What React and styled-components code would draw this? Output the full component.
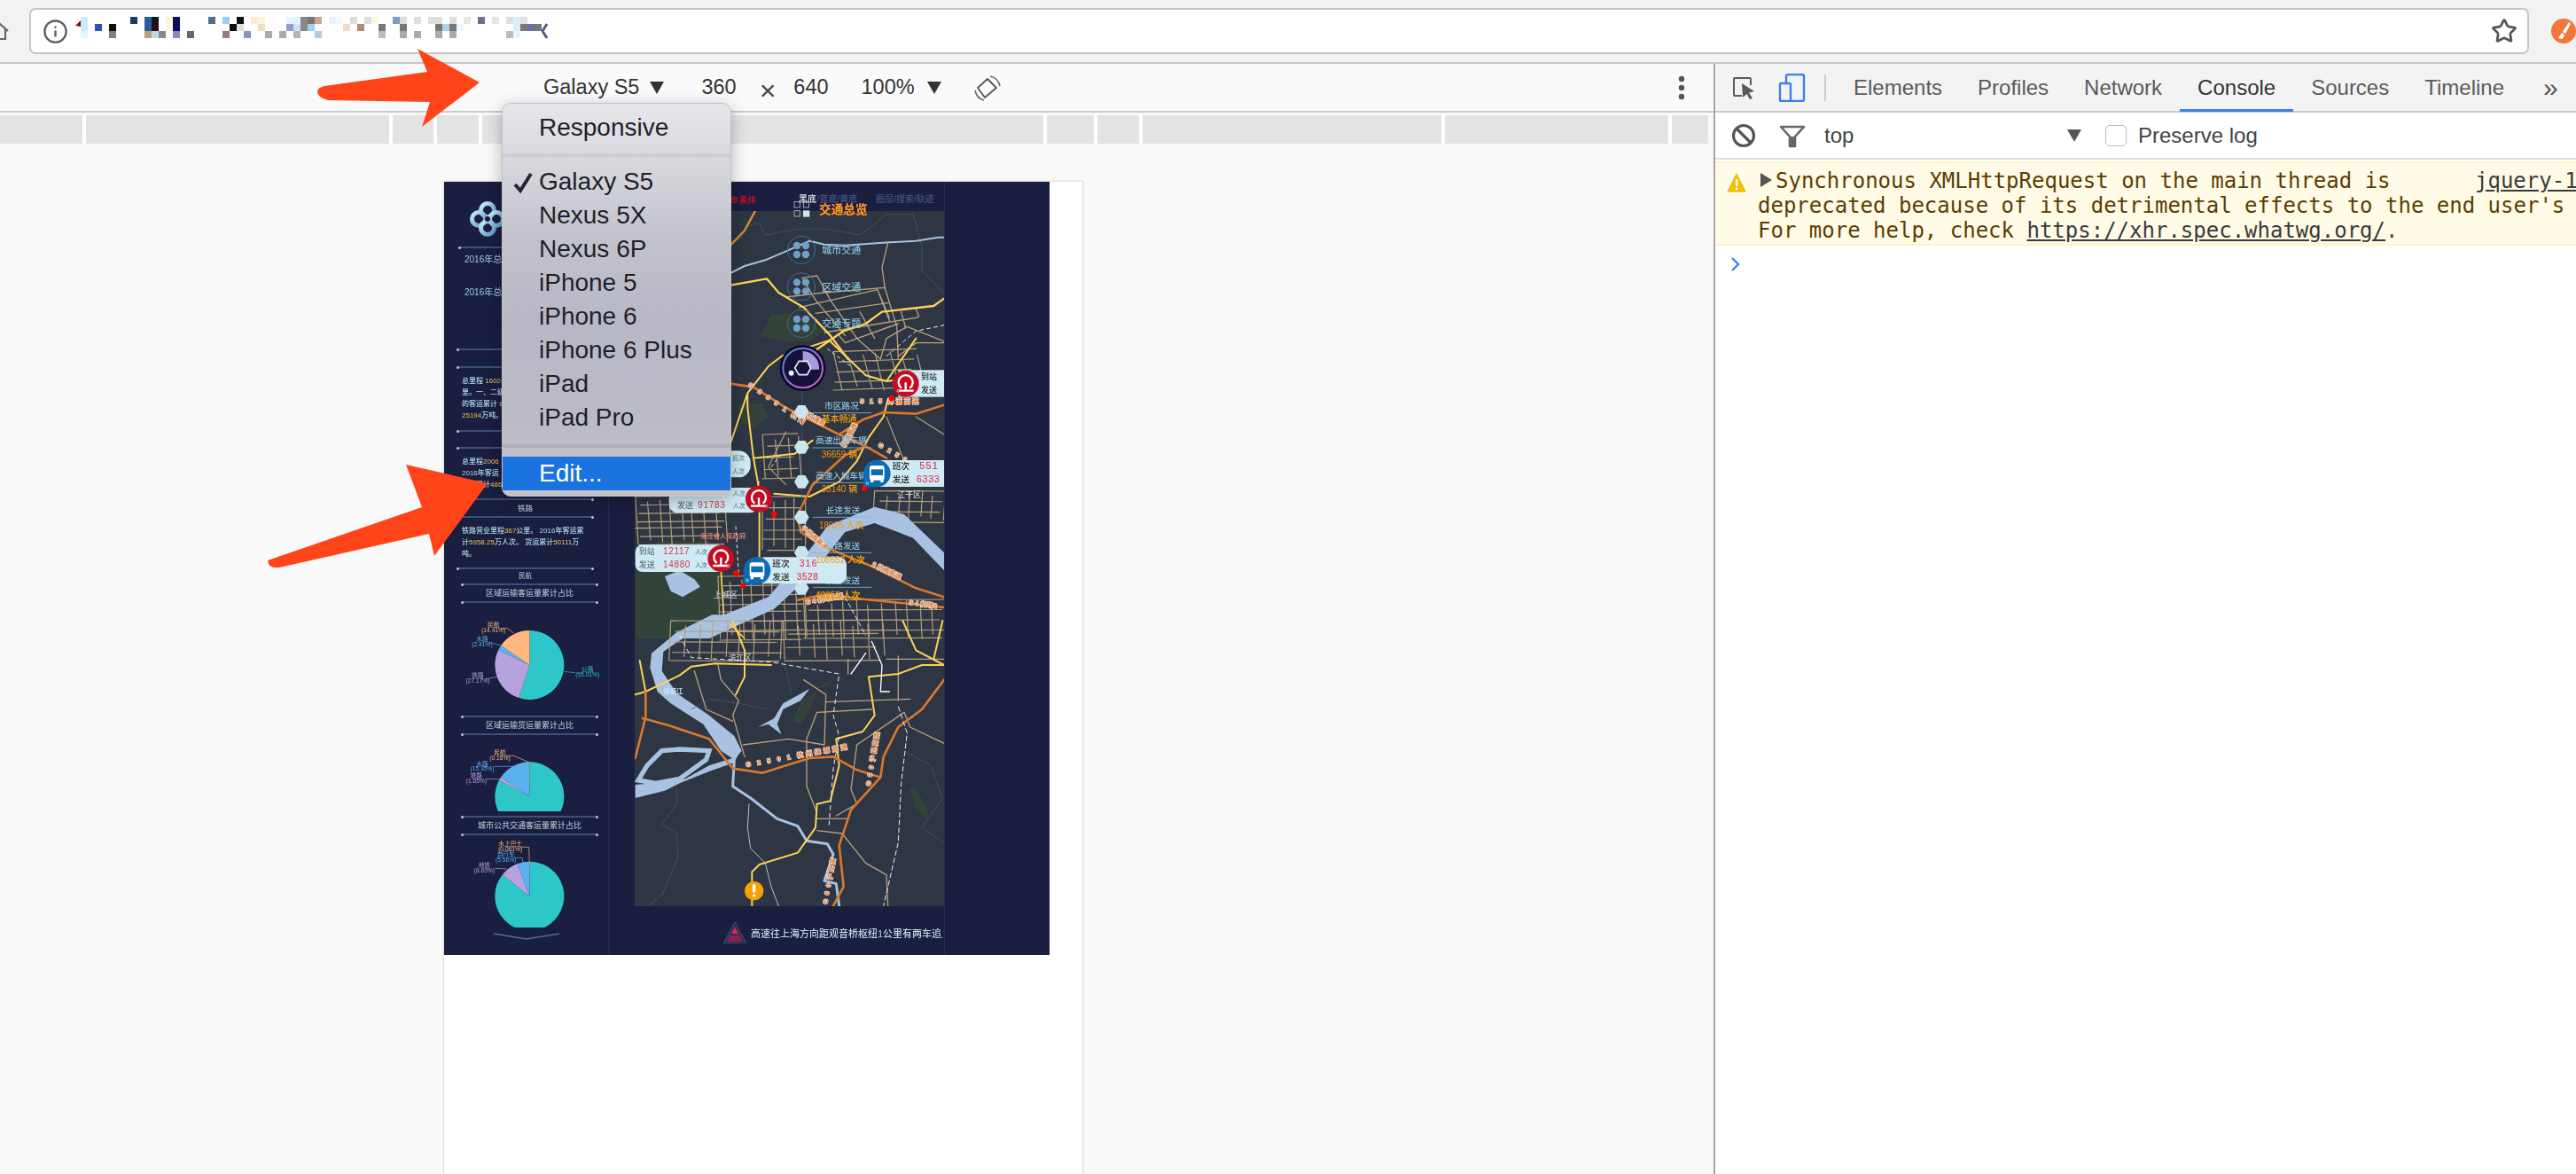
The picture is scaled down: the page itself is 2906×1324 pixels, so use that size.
import React from 'react';
import styled, { createGlobalStyle } from 'styled-components';
import { Info, Star } from 'lucide-react';

const SANS = `"Liberation Sans", Arial, sans-serif`;
const CJK = `"Liberation Sans", "Noto Sans CJK SC", sans-serif`;

const Global = createGlobalStyle`
  html, body { margin: 0; padding: 0; background: #fff; overflow: hidden; }
  #root { width: 2906px; height: 1324px; }
`;

const Window = styled.div`
  position: relative; width: 2906px; height: 1324px; overflow: hidden;
  display: flex; flex-direction: column; font-family: ${SANS};
`;

/* ---------- browser chrome ---------- */
const ChromeBar = styled.div`
  height: 70px; flex: none; display: flex; align-items: center; background: #f2f2f2;
  border-bottom: 2px solid #c4c4c4; overflow: hidden;
`;
const HomeIcon = styled.svg`width: 24px; height: 24px; flex: none; margin-left: -13px; margin-right: 22px;`;
const Omnibox = styled.div`
  width: 2820px; height: 52px; flex: none; box-sizing: border-box; background: #fff;
  border: 2px solid #c6c6c6; border-radius: 7px; display: flex; align-items: center; padding: 0 11px 0 13px;
  color: #5e5e5e;
`;
const UrlMosaic = styled.svg`width: 540px; height: 36px; margin-left: 6px; filter: blur(.7px);`;
const Spacer = styled.div`flex: 1;`;
const Extension = styled.svg`width: 28px; height: 28px; flex: none; margin-left: 25px;`;

const Mosaic = () => {
  const a = [
    [42,0,'#c8ecfc'],[42,1,'#c8ecfc'],[42,2,'#e4f6fd'],[90,1,'#2d55a5'],[138,1,'#0f0f0f'],[138,2,'#808080'],
    [210,0,'#1c3e63'],[258,0,'#2360a8'],[258,1,'#355a96'],[258,2,'#b8a080'],[282,0,'#141414'],[282,1,'#2a0c12'],
    [282,2,'#c0d8e8'],[306,2,'#888'],[330,0,'#fdf3d0'],[330,1,'#fdf8e4'],[354,0,'#0c0c60'],[354,1,'#0c0c60'],
    [354,2,'#8a88c0'],[402,2,'#666'],[474,0,'#4f6f8e'],[522,0,'#94d0f4'],[522,2,'#a07878'],[546,1,'#101010'],
    [570,0,'#101010'],[570,1,'#e0e0e0'],[594,2,'#8a94bc'],[618,0,'#fbecd0'],[642,0,'#fdf4de'],[642,1,'#f5dcc0'],
    [666,2,'#aaa'],[714,2,'#aaa'],[738,0,'#e6f6fd'],[738,1,'#8ca0d0'],[762,0,'#e0f4fb'],[762,1,'#d0e0f0'],
    [762,2,'#b8b4b0'],[786,0,'#888'],[786,1,'#888'],
    [810,0,'#777'],[834,0,'#c8a890'],[810,1,'#9fd0f0'],[882,0,'#eeeef8'],[906,0,'#f5f8ff'],[834,2,'#b8c8e0'],
    [954,0,'#ddd'],[930,1,'#f5dcc0'],[978,1,'#b88870'],[1002,0,'#ddd'],[1026,0,'#fdf6e0'],[1050,1,'#777'],[1050,2,'#bbb'],
    [1098,0,'#7e9cc8'],[1122,0,'#ddd'],[1122,1,'#777'],[1122,2,'#aaa'],[1170,0,'#ddd'],[1170,2,'#aaa'],
    [1218,0,'#ddd'],[1242,0,'#ddd'],[1242,1,'#777'],[1242,2,'#aaa'],[1266,1,'#a8d4f0'],[1290,0,'#ddd'],[1290,1,'#777'],
    [1290,2,'#aaa'],[1314,1,'#e8f8fd'],[1338,0,'#e8e4e4'],[1386,0,'#707088'],[1434,0,'#e8e4e4'],[1482,0,'#e0e0e0'],
    [1482,2,'#bbb'],[1506,0,'#d8f0fd'],[1506,1,'#d8f0fd'],[1506,2,'#e8f4fd'],[1530,0,'#e0e0e0'],[1530,1,'#777'],
    [1554,1,'#6870a8'],[1578,1,'#777'],
  ];
  return (
    <UrlMosaic viewBox="0 0 540 36">
      <path d="M2 12 L12 2 L14 14 Z" fill="#7a0c0c" />
      {a.map(([x, r, c], i) => <rect key={i} x={x / 3 - 6} y={2 + r * 8} width="8" height="8" fill={c} />)}
      <path d="M534 10 L529 18 L534 26" stroke="#4f5f7f" strokeWidth="3" fill="none" />
    </UrlMosaic>
  );
};

/* ---------- split ---------- */
const Split = styled.div`flex: 1; display: flex; min-height: 0;`;
const Emulator = styled.div`width: 1933px; flex: none; display: flex; flex-direction: column; background: #f9f9f9;`;

const DeviceToolbar = styled.div`
  height: 53px; flex: none; background: #fafafa; border-bottom: 2px solid #cbcbcb;
  display: flex; align-items: center; padding: 0 31px 0 613px; font-size: 23.5px; color: #333;
`;
const Tool = styled.span`margin-left: ${p => p.$ml || 0}px; white-space: nowrap;`;
const Caret = styled.span`
  display: inline-block; width: 0; height: 0; margin-left: ${p => p.$ml || 0}px;
  border-left: 8px solid transparent; border-right: 8px solid transparent; border-top: 14px solid ${p => p.$c || '#333'};
`;
const Times = styled.span`margin: 7px 0 0 ${p => p.$ml}px; font-size: 32px; line-height: 30px; color: #444;`;
const RotateIcon = styled.svg`width: 30px; height: 30px; margin-left: 37px; flex: none;`;
const MoreDots = styled.svg`width: 10px; height: 30px; margin-left: auto;`;

const Ruler = styled.div`
  height: 32px; flex: none; margin-top: 3px; display: flex; gap: 4px; background: #fff; width: 1927px;
`;
const RulerCell = styled.div`height: 100%; width: ${p => p.$w}px; flex: none; background: #e3e3e3;`;

const Viewport = styled.div`flex: 1; padding: 42px 0 0 500px; min-height: 0; background: #f9f9f9;`;
const DevicePage = styled.div`
  width: 722px; height: 1200px; background: #fff; border: 1px solid #e2e2e2; border-bottom: 0;
  box-sizing: border-box; box-shadow: 0 0 3px rgba(0,0,0,.08);
`;
const Dashboard = styled.div`
  width: 683px; height: 872px; display: flex; background: #1a1e3f; overflow: hidden;
  font-family: ${CJK}; filter: blur(.35px);
`;

/* ---------- dashboard left column ---------- */
const SideColumn = styled.div`width: 185px; flex: none; border-right: 1px solid #262c50; margin-right: 29px; box-sizing: content-box;`;
const LogoMark = styled.svg`display: block; width: 40px; height: 40px; margin: 22px 0 0 29px;`;
const Rule = styled.div`
  position: relative; height: 2px; background: #3c5078; width: 153px;
  margin: ${p => p.$mt || 0}px 0 0 ${p => p.$ml ?? 15}px;
  &::before, &::after { content: ''; position: absolute; top: -.5px; width: 3px; height: 3px; border-radius: 50%; background: #b8cede; }
  &::before { left: -1px; } &::after { right: -1px; }
`;
const StatLine = styled.div`
  height: 14px; line-height: 14px; font-size: 10px; text-align: ${p => p.$center ? 'center' : 'left'};
  padding-left: ${p => p.$center ? 0 : 23}px; margin-top: ${p => p.$mt || 0}px; color: ${p => p.$c || '#9ccde4'}; white-space: nowrap;
`;
const SectionTitle = styled.div`
  height: ${p => p.$h || 18}px; line-height: ${p => p.$h || 18}px; width: 153px; text-align: center;
  margin-left: ${p => p.$ml ?? 15}px; font-size: ${p => p.$size || 8.5}px; font-weight: 500; color: #a4bccc; white-space: nowrap;
`;
const Para = styled.div`margin: 8px 0 0 20px; width: 150px; font-size: 8px; font-weight: 500; line-height: 13px; color: #b0d8ec; white-space: nowrap;`;
const Num = styled.span`color: #f2c55c;`;
const ChartSvg = styled.svg`display: block; width: 185px; height: ${p => p.$h}px; margin-bottom: ${p => p.$mb || 0}px;`;
const ChartText = styled.text`font-family: ${CJK}; font-size: 20px; text-anchor: middle; fill: ${p => p.$c};`;
const Chevron = styled.svg`display: block; width: 74px; height: 8px; margin: 6px 0 0 56px;`;

const slicePath = (cx, cy, r, a0, a1) => {
  const p = a => [cx + r * Math.sin(a * 2 * Math.PI), cy - r * Math.cos(a * 2 * Math.PI)];
  const [x0, y0] = p(a0), [x1, y1] = p(a1);
  return `M${cx},${cy} L${x0},${y0} A${r},${r} 0 ${a1 - a0 > .5 ? 1 : 0} 1 ${x1},${y1} Z`;
};

const Pie = ({ top, h, cy, slices, labels, mb }) => {
  let acc = 0;
  return (
    <ChartSvg $h={h} $mb={mb} viewBox={`36 ${top} 555 ${h * 3}`}>
      {slices.map(([v, c], i) => {
        const d = slicePath(325, cy, 117, acc, acc + v);
        acc += v;
        return <path key={i} d={d} fill={c} />;
      })}
      {labels.map((l, i) => (
        <g key={i}>
          <polyline points={l.line} fill="none" stroke={l.c} strokeWidth="2" />
          <ChartText x={l.x} y={l.y} $c={l.c}>{l.a}</ChartText>
          <ChartText x={l.x} y={l.y + 17} $c={l.c}>{l.b}</ChartText>
        </g>
      ))}
    </ChartSvg>
  );
};

const T = '#2ec7c9', P = '#b6a2de', B = '#5ab1ef', O = '#ffb980';

const SideBar = () => (
  <SideColumn>
    <LogoMark viewBox="0 0 40 40">
      <defs>
        <linearGradient id="lg" x1="0" y1="0" x2="1" y2="1">
          <stop offset="0" stopColor="#c4eef8" /><stop offset="1" stopColor="#5b93c4" />
        </linearGradient>
      </defs>
      <g fill="none" stroke="url(#lg)" strokeWidth="5">
        <circle cx="20" cy="10" r="7.5" /><circle cx="10" cy="20" r="7.5" />
        <circle cx="30" cy="20" r="7.5" /><circle cx="20" cy="30" r="7.5" />
      </g>
      <circle cx="20" cy="20" r="3" fill="#1a1e3f" />
    </LogoMark>
    <Rule $mt={11} $ml={17} />
    <StatLine $mt={6}>2016年总客运量</StatLine>
    <StatLine $mt={6} $center $c="#f2c55c">88888</StatLine>
    <StatLine $mt={3}>2016年总货运量</StatLine>
    <Rule $mt={56} />
    <SectionTitle $h={18}>公路</SectionTitle>
    <Rule />
    <Para>
      <div>总里程 <Num>16024</Num> 公里</div>
      <div>里。一、二级</div>
      <div>的客运累计 <Num>8</Num></div>
      <div><Num>25194</Num>万吨。</div>
    </Para>
    <Rule $mt={10} />
    <SectionTitle $h={17}>水路</SectionTitle>
    <Rule />
    <Para>
      <div>总里程<Num>2006</Num></div>
      <div>2016年客运</div>
      <div>货运累计<Num>486</Num>万</div>
    </Para>
    <Rule $mt={9} />
    <SectionTitle>铁路</SectionTitle>
    <Rule />
    <Para>
      <div>铁路营业里程<Num>367</Num>公里。 2016年客运累</div>
      <div>计<Num>5958.25</Num>万人次。 货运累计<Num>50111</Num>万</div>
      <div>吨。</div>
    </Para>
    <Rule $mt={9} />
    <SectionTitle $h={16} $size={7.5}>民航</SectionTitle>
    <Rule $ml={20} />
    <SectionTitle $ml={20} $size={9}>区域运输客运量累计占比</SectionTitle>
    <Rule $ml={20} />
    <Pie top={60} h={127} cy={270}
      slices={[[.5501, T], [.2717, P], [.0241, B], [.1541, O]]}
      labels={[
        { c: T, a: '公路', b: '(55.01%)', x: 521, y: 292, line: '442,292 480,296' },
        { c: P, a: '铁路', b: '(27.17%)', x: 150, y: 312, line: '215,310 175,318' },
        { c: B, a: '水路', b: '(2.41%)', x: 165, y: 190, line: '230,205 188,192' },
        { c: O, a: '民航', b: '(14.41%)', x: 203, y: 141, line: '272,162 250,146 228,146' },
      ]} />
    <Rule $ml={20} />
    <SectionTitle $ml={20} $size={9}>区域运输货运量累计占比</SectionTitle>
    <Rule $ml={20} />
    <Pie top={507} h={86} mb={5} cy={715}
      slices={[[.8284, T], [.0165, P], [.1535, B], [.0016, O]]}
      labels={[
        { c: O, a: '民航', b: '(0.16%)', x: 225, y: 574, line: '248,577 272,577 325,600' },
        { c: B, a: '水路', b: '(15.35%)', x: 165, y: 611, line: '205,613 275,613' },
        { c: P, a: '铁路', b: '(1.65%)', x: 145, y: 651, line: '178,655 232,657' },
      ]} />
    <Rule $ml={20} />
    <SectionTitle $ml={20} $size={9}>城市公共交通客运量累计占比</SectionTitle>
    <Rule $ml={20} />
    <Pie top={846} h={104} cy={1052}
      slices={[[.8569, T], [.0869, P], [.0556, B], [.0006, O]]}
      labels={[
        { c: O, a: '水上巴士', b: '(0.061%)', x: 260, y: 883, line: '297,886 323,886 325,938' },
        { c: B, a: '自行车', b: '(5.56%)', x: 245, y: 919, line: '272,922 300,922 303,940' },
        { c: P, a: '地铁', b: '(8.69%)', x: 172, y: 954, line: '207,958 248,960' },
      ]} />
    <Chevron viewBox="0 0 74 8"><path d="M0 1 L37 7 L74 1" stroke="#4f6f9f" strokeWidth="1.4" fill="none" /></Chevron>
  </SideColumn>
);

/* ---------- map ---------- */
const MapColumn = styled.div`width: 349px; flex: none; display: flex; flex-direction: column;`;
const MapSvg = styled.svg`display: block; width: 349px; height: 817px; flex: none;`;
const MapText = styled.text`
  font-family: ${CJK}; font-size: ${p => p.$s || 30}px; fill: ${p => p.$f || '#8cc4e2'};
  font-weight: ${p => p.$w || 500}; letter-spacing: ${p => p.$ls || 0}px;
`;
const RoadText = styled.text`
  font-family: ${CJK}; font-size: 22px; font-weight: 700; fill: #d9783a; stroke: #f4e6da; stroke-width: 4px; paint-order: stroke;
`;
const AlertBar = styled.div`display: flex; align-items: center; height: 55px; padding: 5px 2px 0 100px; box-sizing: border-box;`;
const AlertIcon = styled.svg`width: 26px; height: 24px; flex: none; margin-right: 5px;`;
const AlertText = styled.div`font-size: 11px; font-weight: 500; color: #c4d8e4; white-space: nowrap; overflow: hidden; flex: 1;`;
const RightStrip = styled.div`flex: 1; border-left: 1px solid #262c50;`;

const grid = (x0, y0, x1, y1, nx, ny, skew = 0) => {
  let d = '';
  for (let i = 0; i <= nx; i++) {
    const x = x0 + (x1 - x0) * i / nx + ((i * 7) % 5) * 2;
    d += `M${x},${y0 + ((i * 3) % 4) * 6} L${x + skew},${y1 - ((i * 5) % 3) * 7} `;
  }
  for (let j = 0; j <= ny; j++) {
    const y = y0 + (y1 - y0) * j / ny + ((j * 5) % 4) * 2;
    d += `M${x0 + ((j * 3) % 4) * 6},${y} L${x1 - ((j * 7) % 3) * 8},${y - skew / 3} `;
  }
  return d;
};

const RailMarker = ({ x, y, dot, dx, dy }) => (
  <g>
    <path d={`M${x + dx * 46},${y + dy * 46} L${x + dx * 46},${y - dy * 10} L${x - dx * 10},${y + dy * 46} Z`} fill="#c30d23" />
    <circle cx={x} cy={y} r="45" fill="#c30d23" />
    <path d={`M${x - 14},${y + 15} A24 24 0 1 1 ${x + 14},${y + 15}`} fill="none" stroke="#fff" strokeWidth="7" />
    <path d={`M${x - 27},${y + 24} H${x + 27} M${x},${y - 4} V${y + 20}`} stroke="#fff" strokeWidth="7" />
    <circle cx={x + dx * 33} cy={y + dy * 33} r="4" fill="#c30d23" stroke="#fff" strokeWidth="2" />
    <circle cx={dot[0]} cy={dot[1]} r="10" fill="#f00" />
  </g>
);
const BusMarker = ({ x, y, dot }) => (
  <g>
    <path d={`M${x - 46},${y + 46} L${x - 46},${y} L${x},${y + 46} Z`} fill="#0f6ab4" />
    <circle cx={x} cy={y} r="46" fill="#0f6ab4" />
    <rect x={x - 25} y={y - 27} width="50" height="50" rx="8" fill="#fff" />
    <rect x={x - 20} y={y - 14} width="40" height="20" fill="#0f6ab4" />
    <rect x={x - 22} y={y + 22} width="10" height="8" fill="#fff" /><rect x={x + 12} y={y + 22} width="10" height="8" fill="#fff" />
    <circle cx={x - 33} cy={y + 33} r="4" fill="#0f6ab4" stroke="#fff" strokeWidth="2" />
    <circle cx={dot[0]} cy={dot[1]} r="9" fill="#f00" />
  </g>
);
const Hex = ({ x, y }) => (
  <polygon points={`${x - 25},${y} ${x - 12},${y - 22} ${x + 12},${y - 22} ${x + 25},${y} ${x + 12},${y + 22} ${x - 12},${y + 22}`} fill="#c9e6ef" />
);
const NavRing = ({ y }) => (
  <g>
    <circle cx="252" cy={y} r="47" fill="none" stroke="#45688f" strokeWidth="3" />
    {[[-15, -15], [15, -15], [-15, 15], [15, 15]].map(([a, b], i) => <circle key={i} cx={252 + a} cy={y + b} r="12.5" fill="#6ea0c8" />)}
  </g>
);
const Stat = ({ lx, ly, label, vx, vy, value, unit }) => (
  <g>
    <MapText x={lx} y={ly + 11} $s={29}>{label}</MapText>
    <line x1="650" x2="850" y1={ly + 25} y2={ly + 25} stroke="#7fb8d8" strokeWidth="2.5" />
    <MapText x={vx} y={vy + 11} $s={30} $f="#f39c12" $w={500}>{value}{unit}</MapText>
  </g>
);

const YEL = '#fdd25a', ORG = '#d9782d', RIV = '#a9c2e2', TAN = '#b8a27c', CONT = '#4a5a6a';

const Roads = ({ c, w, d }) => <path d={d} fill="none" stroke={c} strokeWidth={w} strokeLinejoin="round" strokeLinecap="round" />;

const MapDrawing = () => (
  <MapSvg viewBox="716 205 349 817">
    <defs>
      <linearGradient id="ring" x1="0" y1="0" x2="1" y2="1">
        <stop offset="0" stopColor="#3a8fd0" /><stop offset=".5" stopColor="#9a6fd8" /><stop offset="1" stopColor="#e05fb0" />
      </linearGradient>
      <filter id="glow" x="-20%" y="-40%" width="140%" height="180%"><feGaussianBlur stdDeviation="1.2" /></filter>
    </defs>
    <svg x="716" y="238" width="349" height="784" viewBox="716 238 349 784">
      <rect x="716" y="238" width="349" height="784" fill="#2e3643" />

      {/* north */}
      <g transform="translate(820,205) scale(.33333)">
        <path d="M110,525 L150,450 L200,445 L290,480 L330,500 L280,540 L200,540 Z" fill="#33433a" />
        <Roads c={CONT} w={2} d="M12,210 L50,190 L70,150 L110,140 L130,180 L240,160 L340,160 L450,180 L490,150 L540,110 L630,110 L660,220 L660,300 L700,340 L735,380" />
        <Roads c={RIV} w={6} d="M-300,480 L-120,380 L0,315 L60,285 L130,265 L200,235 L280,200 L330,212 L400,215 L550,205 L640,200 L715,188 L750,188" />
        <Roads c={TAN} w={4} d="M545,205 L525,290 L535,360 L575,490 L580,600 M255,325 L305,318 L350,400 L440,530 L520,600 M255,325 L300,400 L400,520 M200,390 L330,375 L535,358 M245,425 L510,365 L550,460 M300,445 L545,410 M510,365 L550,470 M330,510 L640,460 L650,455 L640,430 M380,520 L400,545 L580,480 M450,440 L500,530 M590,440 L605,495 M520,600 L540,530 L610,490 L735,540 M735,545 L640,545 L580,590" />
        <Roads c="#e08a2e" w={7} d="M95,100 L60,165 L12,215 L-60,260" />
        <Roads c={YEL} w={7} d="M-200,375 L0,352 L135,328 L175,375 L260,425 L350,520 L410,600 M300,570 L395,505 L470,480 L525,440 L700,420 L735,395" />
        <path d="M540,590 L640,505 L735,485" fill="none" stroke="#eee" strokeWidth="3" strokeDasharray="14 10" />
      </g>

      {/* centre */}
      <g transform="translate(700,380) scale(.33333)">
        <path d="M50,800 L130,690 L300,690 L350,790 L330,1020 L180,1020 L50,1020 Z" fill="#33433a" />
        <path d="M400,230 L480,225 L500,270 L450,310 L410,290 Z" fill="#33433a" />
        <Roads c={TAN} w={3.5} d={grid(50, 540, 350, 700, 8, 6, 10)} />
        <Roads c={TAN} w={3.5} d={grid(480, 540, 620, 720, 4, 5)} />
        <Roads c={TAN} w={3.5} d={grid(620, 890, 1095, 1020, 11, 4, 6)} />
        <Roads c={TAN} w={3.5} d={grid(860, 520, 1095, 620, 6, 3, -6)} />
        <Roads c={TAN} w={3.5} d={grid(480, 330, 600, 480, 3, 4, 10)} />
        <Roads c={TAN} w={3.5} d={grid(720, 50, 1000, 180, 6, 4, 30)} />
        <Roads c={TAN} w={3.5} d={grid(330, 810, 620, 1020, 8, 7, 8)} />
        <Roads c={TAN} w={3.5} d="M1000,270 L1095,330 M900,270 L960,420 L1095,480 M560,320 L500,440 L560,500" />
        <path d="M180,1020 L300,960 L500,880 L640,720 L700,640 L860,575 L960,600 L1095,730 L1095,790 L990,680 L860,630 L760,660 L650,800 L520,920 L300,1020 Z" fill={RIV} />
        <path d="M150,810 L200,790 L250,820 L270,845 L210,880 L170,860 Z" fill={RIV} />
        <Roads c={YEL} w={6} d="M372,360 L430,190 L500,100 L545,65 L710,10 M430,190 L430,240 L450,410 L470,520 L470,750 M450,410 L590,395 L650,350 M710,15 L830,130 L900,150 L1000,140 M905,210 L890,270 L840,340 L800,420 L740,490 L640,540 L520,530 M1000,5 L900,150" />
        <Roads c="#fdd25a" w={5} d="M340,790 L350,950 L420,1020" />
        <Roads c={ORG} w={8} d="M372,158 L450,170 L560,240 L680,300 L740,330 L820,280 L890,255 L1000,260 L1095,230 M740,330 L830,370 L900,410 M830,370 L760,400 L650,500 L600,600 L610,660 L690,710 L860,780 L1000,850 L1095,880 M600,890 L700,870 L800,885 L1000,905 L1095,915" />
        <path d="M510,440 L540,400 M700,40 L780,100 M470,490 L430,560 M390,640 L400,800" fill="none" stroke="#eee" strokeWidth="3" strokeDasharray="12 9" />
        <path d="M760,880 L830,1010" fill="none" stroke="#eee" strokeWidth="3" strokeDasharray="16 8" />
        <RoadText x="430" y="165" transform="rotate(35 430 165)" letterSpacing="8">G 2 8 9 1 杭州</RoadText>
        <RoadText x="630" y="270" transform="rotate(28 630 270)">杭浦高</RoadText>
        <RoadText x="810" y="225" letterSpacing="6">S 1 5 沛浦高速</RoadText>
        <RoadText x="760" y="375" transform="rotate(-62 760 375)">杭浦高速</RoadText>
        <RoadText x="870" y="370" transform="rotate(30 870 370)" letterSpacing="6">G 2 5 0</RoadText>
        <RoadText x="610" y="650" transform="rotate(40 610 650)">沪杭甬高速</RoadText>
        <RoadText x="850" y="775" transform="rotate(25 850 775)">2 杭甬高速</RoadText>
        <RoadText x="630" y="905" transform="rotate(-10 630 905)">S 4 机场高速</RoadText>
        <RoadText x="975" y="905" transform="rotate(8 975 905)">S 4 机场2</RoadText>
        <MapText x="270" y="680" $s={22} $f="#f08a70">浙江省人民政府</MapText>
        <MapText x="936" y="543" $s={27} $f="#c8ccd0">江干区</MapText>
        <MapText x="315" y="883" $s={27} $f="#c8ccd0">上城区</MapText>
      </g>

      {/* south */}
      <g transform="translate(700,700) scale(.33333)">
        <path d="M310,-20 L410,-20 L340,35 L210,60 L145,105 L140,170 L190,245 L300,320 L385,390 L410,440 L385,470 L340,440 L280,350 L170,280 L125,240 L100,160 L105,110 L190,40 Z" fill={RIV} />
        <path d="M300,440 L200,435 L140,440 L90,490 L60,540 L120,550 L200,535 L290,470 Z" fill="none" stroke={RIV} strokeWidth="16" />
        <path d="M50,555 L160,545 L220,535 L300,490 L380,465 L400,450 L385,480 L300,510 L200,550 L150,575 L50,600 Z" fill={RIV} />
        <Roads c={RIV} w={9} d="M385,470 L380,560 L440,600 L530,670 L600,695 L630,745 L700,755 L720,790 L690,880 L730,890 L740,965" />
        <Roads c={RIV} w={3} d="M435,620 L430,700 L440,770 L490,820 L510,900 L535,965" />
        <path d="M465,360 L520,330 L550,280 L640,230 L610,270 L550,300 L530,350 L545,385 L500,350 Z" fill={RIV} />
        <path d="M585,340 L610,270 L665,240 L640,300 L610,350 Z M660,230 L740,185 L690,225 Z" fill="#33433a" />
        <path d="M975,560 L1000,570 L1040,640 L1040,670 L1000,640 Z" fill="#33433a" />
        <Roads c={CONT} w={2} d="M190,570 L190,620 L140,690 L190,720 L195,800 L140,930 L90,965 M960,440 L1050,490 L1090,600 L1020,700 L1095,750 M240,300 L300,265 L400,280 L500,300 M550,120 L580,250" />
        <Roads c={TAN} w={3.5} d={grid(170, 0, 545, 135, 8, 4, -6)} />
        <Roads c={TAN} w={3.5} d={grid(550, 0, 880, 130, 7, 3, 6)} />
        <Roads c={TAN} w={4} d="M330,150 L340,200 L400,270 L380,320 L420,460 M250,170 L290,300 L380,340 M415,420 L570,400 L690,420 L695,250 L620,200 M630,400 L630,560 L665,650 M695,275 L980,265 M665,310 L850,300 M665,310 L630,400 M1095,415 L980,360 L960,310 L800,420 L780,570 L800,620 L730,660 M665,670 L770,670 M665,710 L750,720 L830,820 L900,860 L905,965 M900,130 L1095,130 M770,180 L770,130 M940,270 L940,120" />
        <Roads c={YEL} w={6} d="M50,250 L85,240 L200,185 L240,155 L320,145 L510,150 M380,0 L420,100 L420,190 L390,250 M65,135 L85,240 M445,965 L445,850 L470,825 L600,785 L660,700 L665,620 L710,610 L740,490 L730,400 L820,375 L860,320 L840,190 L940,180 L1020,150 L1095,150 M955,0 L1000,100 L1095,150 M1090,0 L1060,130" />
        <Roads c={ORG} w={8} d="M75,330 L165,355 L300,400 L340,450 L380,500 L480,515 L560,490 L640,465 L720,460 L800,505 L880,530 M880,530 L890,460 L940,360 L1020,300 L1095,200 M880,530 L780,640 L740,760 L755,900 L720,965 M85,325 L50,465 M85,240 L85,325" />
        <path d="M200,50 L240,125 L510,140 L740,180 L720,320 L740,390 L720,500 L705,700" fill="none" stroke="#eee" strokeWidth="3" strokeDasharray="16 10" />
        <path d="M940,290 L970,380 L950,550 L940,750 L890,965" fill="none" stroke="#eee" strokeWidth="3" strokeDasharray="18 8" />
        <Roads c="#fff" w={4} d="M850,70 L885,150 L880,240 L910,240 M780,180 L830,110" />
        <RoadText x="425" y="495" transform="rotate(-10 425 495)" letterSpacing="8">G 2 5 0 1 杭州绕城高速</RoadText>
        <RoadText x="845" y="560" transform="rotate(-80 845 560)" letterSpacing="4">G 6 0 沪昆高速</RoadText>
        <RoadText x="700" y="960" transform="rotate(-80 700 960)" letterSpacing="4">G 6 0 沪昆高</RoadText>
        <MapText x="145" y="247" $s={22} $f="#cfe0f5" $w={700}>钱塘江</MapText>
        <MapText x="365" y="135" $s={26} $f="#c8ccd0">滨江区</MapText>
        <circle cx="452" cy="914" r="32" fill="#f7a100" />
        <rect x="447" y="892" width="10" height="28" rx="4" fill="#fff" /><circle cx="452" cy="930" r="5.5" fill="#fff" />
      </g>

      {/* overlay widgets */}
      <g transform="translate(820,205) scale(.33333)">
        <NavRing y={231} /><NavRing y={355} /><NavRing y={480} />
        <MapText x="322" y="242" $s={33}>城市交通</MapText>
        <MapText x="322" y="368" $s={33}>区域交通</MapText>
        <MapText x="322" y="492" $s={33}>交通专题</MapText>
      </g>
      <g transform="translate(700,380) scale(.33333)">
        <rect x="613" y="180" width="2" height="700" fill="#44566a" />
        <circle cx="617" cy="105" r="78" fill="#0a0a2a" />
        <circle cx="617" cy="105" r="67" fill="#16123c" stroke="url(#ring)" strokeWidth="6" />
        <path d="M617,48 A57,57 0 0 1 672,110 L640,110 A25,25 0 0 0 617,80 Z" fill="#a79be0" />
        <polygon points="590,105 604,82 632,82 644,105 632,128 604,128" fill="#16123c" stroke="#e8ecf4" strokeWidth="5" />
        <circle cx="578" cy="122" r="9" fill="#e8f4fa" />
        {[253, 373, 490, 610, 730, 850].map(y => <Hex key={y} x={613} y={y} />)}
        <Stat lx={690} ly={232} label="市区路况" vx={680} vy={278} value="基本畅通" />
        <Stat lx={660} ly={350} label="高速出城车辆" vx={680} vy={398} value="36659 辆" />
        <Stat lx={660} ly={468} label="高速入城车辆" vx={680} vy={515} value="33140 辆" />
        <Stat lx={695} ly={585} label="长途发送" vx={672} vy={636} value="18025 人次" />
        <Stat lx={695} ly={705} label="铁路发送" vx={660} vy={755} value="108552 人次" />
        <Stat lx={695} ly={822} label="航空发送" vx={660} vy={873} value="40355 人次" />

        <rect x="300" y="385" width="140" height="90" rx="40" fill="#cfeaf2" />
        <MapText x="378" y="418" $s={21} $f="#6a8490">班次</MapText>
        <MapText x="378" y="462" $s={21} $f="#6a8490">人次</MapText>

        <rect x="165" y="510" width="300" height="85" rx="26" fill="#cfeaf2" />
        <MapText x="380" y="536" $s={21} $f="#6a8490">人次</MapText>
        <MapText x="192" y="580" $s={27} $f="#60707a">发送</MapText>
        <MapText x="262" y="580" $s={30} $f="#d8314f" $ls={2}>91783</MapText>
        <MapText x="380" y="580" $s={21} $f="#6a8490">人次</MapText>
        <RailMarker x={468} y={548} dot={[520, 600]} dx={.75} dy={.75} />

        <rect x="940" y="112" width="160" height="91" fill="#cfeaf2" />
        <MapText x="1017" y="143" $s={27} $f="#222">到站</MapText>
        <MapText x="1017" y="188" $s={27} $f="#222">发送</MapText>
        <RailMarker x={965} y={158} dot={[918, 207]} dx={-.75} dy={.75} />

        <rect x="870" y="417" width="230" height="90" fill="#cfeaf2" />
        <MapText x="920" y="446" $s={29} $f="#222">班次</MapText>
        <MapText x="920" y="491" $s={29} $f="#222">发送</MapText>
        <MapText x="1012" y="446" $s={32} $f="#e8173c" $ls={4}>551</MapText>
        <MapText x="1002" y="491" $s={32} $f="#e8173c" $ls={2}>6333</MapText>
        <BusMarker x={868} y={462} dot={[825, 513]} />

        <rect x="50" y="703" width="300" height="92" rx="24" fill="#cfeaf2" />
        <MapText x="62" y="735" $s={27} $f="#60707a">到站</MapText>
        <MapText x="62" y="780" $s={27} $f="#60707a">发送</MapText>
        <MapText x="144" y="735" $s={30} $f="#d8314f" $ls={2}>12117</MapText>
        <MapText x="144" y="780" $s={30} $f="#d8314f" $ls={2}>14880</MapText>
        <MapText x="252" y="735" $s={21} $f="#6a8490">人次</MapText>
        <MapText x="252" y="780" $s={21} $f="#6a8490">人次</MapText>
        <RailMarker x={340} y={750} dot={[391, 800]} dx={.75} dy={.75} />

        <rect x="460" y="745" width="305" height="90" rx="26" fill="#cfeaf2" />
        <MapText x="514" y="776" $s={29} $f="#222">班次</MapText>
        <MapText x="514" y="822" $s={29} $f="#222">发送</MapText>
        <MapText x="606" y="776" $s={30} $f="#e8173c" $ls={4}>316</MapText>
        <MapText x="596" y="822" $s={30} $f="#e8173c" $ls={2}>3528</MapText>
        <BusMarker x={462} y={790} dot={[415, 842]} />
        <MapText x="660" y="766" $s={30} $f="#f39c12" $w={500}>108552 人次</MapText>
        <MapText x="660" y="884" $s={30} $f="#f39c12" $w={500}>40355 人次</MapText>
      </g>
    </svg>

    {/* header strip */}
    <g transform="translate(820,205) scale(.33333)">
      <MapText x="12" y="73" $s={26} $f="#e0101c">申</MapText>
      <MapText x="42" y="73" $s={28} $f="#e0101c">黄炜</MapText>
      <MapText x="243" y="68" $s={30} $f="#f0f2f6">黑底</MapText>
      <MapText x="305" y="68" $s={30} $f="#4a5680">/蓝底/黄底</MapText>
      <MapText x="505" y="68" $s={30} $f="#4a5680">图层/搜索/轨迹</MapText>
      <rect x="228" y="68" width="19" height="19" fill="none" stroke="#b4c2cc" strokeWidth="2.5" />
      <rect x="259" y="68" width="19" height="19" fill="none" stroke="#b4c2cc" strokeWidth="2.5" />
      <rect x="228" y="98" width="19" height="19" fill="none" stroke="#b4c2cc" strokeWidth="2.5" />
      <rect x="258" y="97" width="22" height="22" fill="#c9e6ef" />
      <MapText x="312" y="108" $s={41} $f="#e2342a" $w={700} filter="url(#glow)">交通总览</MapText>
      <MapText x="312" y="108" $s={41} $f="#f7a020" $w={700}>交通总览</MapText>
    </g>
  </MapSvg>
);

/* ---------- menu ---------- */
const DeviceMenu = styled.div`
  position: absolute; left: 566px; top: 116px; width: 259px; height: 444px; box-sizing: border-box; z-index: 5;
  padding: 8px 0; border-radius: 10px; border: 1px solid #c2c2c6;
  background: linear-gradient(#e7e6eb 0%, #d8d8de 14%, #c2c2cc 35%, #b8b8c5 55%, #bcbcc6 85%, #c3c3cb 100%);
  box-shadow: 0 4px 18px rgba(0,0,0,.28); font-family: ${SANS}; color: #1f1f28; font-size: 28px;
`;
const MenuItem = styled.div`
  position: relative; height: 38px; line-height: 38px; padding-left: 41px;
  background: ${p => p.$active ? '#1a73de' : 'transparent'}; color: ${p => p.$active ? '#fff' : 'inherit'};
`;
const MenuCheck = styled.svg`position: absolute; left: 12px; top: 8px; width: 22px; height: 24px;`;
const MenuSep = styled.div`height: 4px; margin: ${p => p.$t}px 0 ${p => p.$b}px; background: ${p => p.$c};`;

/* ---------- devtools ---------- */
const DevTools = styled.div`flex: 1; border-left: 2px solid #a6a6a6; background: #fff; display: flex; flex-direction: column; overflow: hidden;`;
const TabBar = styled.div`
  height: 53px; flex: none; display: flex; align-items: center; background: #f3f3f3; border-bottom: 2px solid #cbcbcb;
`;
const IconInspect = styled.svg`width: 28px; height: 28px; margin-left: 19px; flex: none;`;
const IconDevice = styled.svg`width: 32px; height: 32px; margin-left: 24px; flex: none;`;
const TabDivider = styled.div`width: 2px; height: 30px; margin: 0 11px 0 20px; background: #ccc; flex: none;`;
const Tab = styled.div`
  height: 53px; line-height: 52px; box-sizing: border-box; padding: 0 20px; font-size: 24px; flex: none; margin-bottom: -2px;
  color: ${p => p.$active ? '#333' : '#5a5a5a'}; border-bottom: 3px solid ${p => p.$active ? '#3b80ee' : 'transparent'};
`;
const OverflowMark = styled.div`margin-left: 24px; font-size: 30px; color: #555; line-height: 50px;`;
const ConsoleBar = styled.div`
  height: 51px; flex: none; display: flex; align-items: center; border-bottom: 2px solid #dedede; font-size: 24px; color: #444; margin-bottom: 2px;
`;
const IconBlock = styled.svg`width: 28px; height: 28px; margin-left: 18px; flex: none;`;
const IconFilter = styled.svg`width: 28px; height: 28px; margin-left: 27px; flex: none;`;
const ContextLabel = styled.div`width: 274px; margin-left: 22px; flex: none;`;
const CheckBox = styled.div`width: 22px; height: 22px; margin-left: 27px; border: 1px solid #b9b9b9; border-radius: 5px; background: #fff; flex: none;`;
const CheckLabel = styled.div`margin-left: 13px;`;
const WarnRow = styled.div`
  position: relative; flex: none; box-sizing: border-box; height: 95px; padding: 6px 0 0 48px; background: #fffbe6;
  border-top: 2px solid #fdf3c4; border-bottom: 2px solid #fdf3c4; font-family: "DejaVu Sans Mono", monospace;
  font-size: 24px; line-height: 28px; color: #5c3c00; white-space: nowrap; overflow: hidden;
`;
const WarnIcon = styled.svg`position: absolute; left: 13px; top: 11px; width: 22px; height: 22px;`;
const WarnLine = styled.div`display: flex;`;
const WarnMessage = styled.div`width: 809px; flex: none;`;
const Disclosure = styled.span`
  display: inline-block; width: 0; height: 0; margin: 0 4px 0 3px; vertical-align: 1px;
  border-top: 8px solid transparent; border-bottom: 8px solid transparent; border-left: 13px solid #555;
`;
const WarnLink = styled.span`color: #3a3a3a; text-decoration: underline;`;
const PromptIcon = styled.svg`display: block; width: 14px; height: 18px; margin: 12px 0 0 16px;`;

/* ---------- arrows ---------- */
const Arrow = styled.svg`position: absolute; left: 0; top: 0; width: 2906px; height: 1324px; z-index: 6; pointer-events: none;`;

const rulerCells = [93, 342, 46, 47, 633, 53, 47, 337, 252, 41];
const tabs = ['Elements', 'Profiles', 'Network', 'Console', 'Sources', 'Timeline'];
const devices = ['Nexus 5X', 'Nexus 6P', 'iPhone 5', 'iPhone 6', 'iPhone 6 Plus', 'iPad', 'iPad Pro'];

export default function App() {
  return (
    <Window>
      <Global />
      <ChromeBar>
        <HomeIcon viewBox="0 0 24 24"><path d="M2 12 L12 3 L22 12 M5 10 V21 H19 V10" fill="none" stroke="#666" strokeWidth="2.2" /></HomeIcon>
        <Omnibox>
          <Info size={29} strokeWidth={2} />
          <Mosaic />
          <Spacer />
          <Star size={30} strokeWidth={2.2} color="#555" />
        </Omnibox>
        <Extension viewBox="0 0 28 28">
          <circle cx="14" cy="14" r="14" fill="#f2773a" />
          <path d="M20 4 L13 15 L16 17 L22 6 Z M12 16 L8 22 L13 23 L15 18 Z" fill="#fff" />
        </Extension>
      </ChromeBar>
      <Split>
        <Emulator>
          <DeviceToolbar>
            <Tool>Galaxy S5</Tool>
            <Caret $ml={12} />
            <Tool $ml={42}>360</Tool>
            <Times $ml={26}>×</Times>
            <Tool $ml={20}>640</Tool>
            <Tool $ml={37}>100%</Tool>
            <Caret $ml={14} />
            <RotateIcon viewBox="0 0 30 30">
              <path d="M15 5 L25 15 L12 26 L4 15 Z" fill="none" stroke="#555" strokeWidth="1.8" strokeLinejoin="round" />
              <path d="M18 2 A14 14 0 0 1 29 13 M11 29 A14 14 0 0 1 1 18" fill="none" stroke="#666" strokeWidth="1.6" />
            </RotateIcon>
            <MoreDots viewBox="0 0 10 30"><circle cx="5" cy="5" r="3.2" fill="#555" /><circle cx="5" cy="15" r="3.2" fill="#555" /><circle cx="5" cy="25" r="3.2" fill="#555" /></MoreDots>
          </DeviceToolbar>
          <Ruler>{rulerCells.map((w, i) => <RulerCell key={i} $w={w} />)}</Ruler>
          <Viewport>
            <DevicePage>
              <Dashboard>
                <SideBar />
                <MapColumn>
                  <MapDrawing />
                  <AlertBar>
                    <AlertIcon viewBox="0 0 26 24">
                      <path d="M13 0 L26 24 H0 Z" fill="#2a2f55" stroke="#3f5578" strokeWidth="1" />
                      <path d="M13 5 L17 13 H9 Z" fill="#d8265c" />
                      <path d="M4 22 L7 15 H19 L22 22 Z" fill="#8c1f50" />
                    </AlertIcon>
                    <AlertText>高速往上海方向距观音桥枢纽1公里有两车追尾</AlertText>
                  </AlertBar>
                </MapColumn>
                <RightStrip />
              </Dashboard>
            </DevicePage>
          </Viewport>
        </Emulator>
        <DevTools>
          <TabBar>
            <IconInspect viewBox="0 0 28 28">
              <path d="M11 23 H3 Q2 23 2 22 V4 Q2 3 3 3 H20 Q21 3 21 4 V11" fill="none" stroke="#5a5a5a" strokeWidth="2" />
              <path d="M11 9 L25 18 L19 19.5 L23 26 L20 27 L16.5 21 L12 25 Z" fill="#5a5a5a" />
            </IconInspect>
            <IconDevice viewBox="0 0 32 32">
              <rect x="9" y="1" width="20" height="30" rx="2" fill="none" stroke="#3b80ee" strokeWidth="2.4" />
              <rect x="2" y="11" width="12" height="20" rx="1" fill="#f3f3f3" stroke="#3b80ee" strokeWidth="2.4" />
            </IconDevice>
            <TabDivider />
            {tabs.map(t => <Tab key={t} $active={t === 'Console'}>{t}</Tab>)}
            <OverflowMark>»</OverflowMark>
          </TabBar>
          <ConsoleBar>
            <IconBlock viewBox="0 0 28 28">
              <circle cx="14" cy="14" r="11.5" fill="none" stroke="#555" strokeWidth="3.2" />
              <path d="M6 6 L22 22" stroke="#555" strokeWidth="3.2" />
            </IconBlock>
            <IconFilter viewBox="0 0 28 28">
              <path d="M1 4 H27 L17 15 V26 H11 V15 Z" fill="#fff" stroke="#666" strokeWidth="2.6" strokeLinejoin="round" />
              <path d="M11 15 H17 V26 H11 Z" fill="#666" />
            </IconFilter>
            <ContextLabel>top</ContextLabel>
            <Caret $c="#555" />
            <CheckBox />
            <CheckLabel>Preserve log</CheckLabel>
          </ConsoleBar>
          <WarnRow>
            <WarnIcon viewBox="0 0 22 22">
              <path d="M11 1 L21 21 H1 Z" fill="#f5c000" stroke="#e8b000" strokeLinejoin="round" />
              <rect x="10" y="7" width="2.4" height="8" fill="#fff" /><rect x="10" y="16.5" width="2.4" height="2.6" fill="#fff" />
            </WarnIcon>
            <WarnLine>
              <WarnMessage><Disclosure />Synchronous XMLHttpRequest on the main thread is</WarnMessage>
              <WarnLink>jquery-1.9.1.js:5</WarnLink>
            </WarnLine>
            <div>deprecated because of its detrimental effects to the end user's</div>
            <div>For more help, check <WarnLink>https://xhr.spec.whatwg.org/</WarnLink>.</div>
          </WarnRow>
          <PromptIcon viewBox="0 0 14 18"><path d="M3 2 L10 9 L3 16" fill="none" stroke="#3b80ee" strokeWidth="2.4" /></PromptIcon>
        </DevTools>
      </Split>

      <DeviceMenu>
        <MenuItem>Responsive</MenuItem>
        <MenuSep $t={10} $b={9} $c="#ccccd2" />
        <MenuItem>
          <MenuCheck viewBox="0 0 22 24"><path d="M2 14 L8 21 L20 2" fill="none" stroke="#26262e" strokeWidth="4" /></MenuCheck>
          Galaxy S5
        </MenuItem>
        {devices.map(d => <MenuItem key={d}>{d}</MenuItem>)}
        <MenuSep $t={11} $b={10} $c="#aeaeb8" />
        <MenuItem $active>Edit...</MenuItem>
      </DeviceMenu>

      <Arrow viewBox="0 0 2906 1324">
        <path d="M471 55 L541 93 L476 143 L485 115 L370 113 Q358 110 358 103 Q358 99 366 97 L482 81 Z" fill="#ff4419" />
        <path d="M458 524 L550 545 L490 627 L484 602 L315 640 Q303 642 302 632 L476 572 Z" fill="#ff4419" />
      </Arrow>
    </Window>
  );
}
